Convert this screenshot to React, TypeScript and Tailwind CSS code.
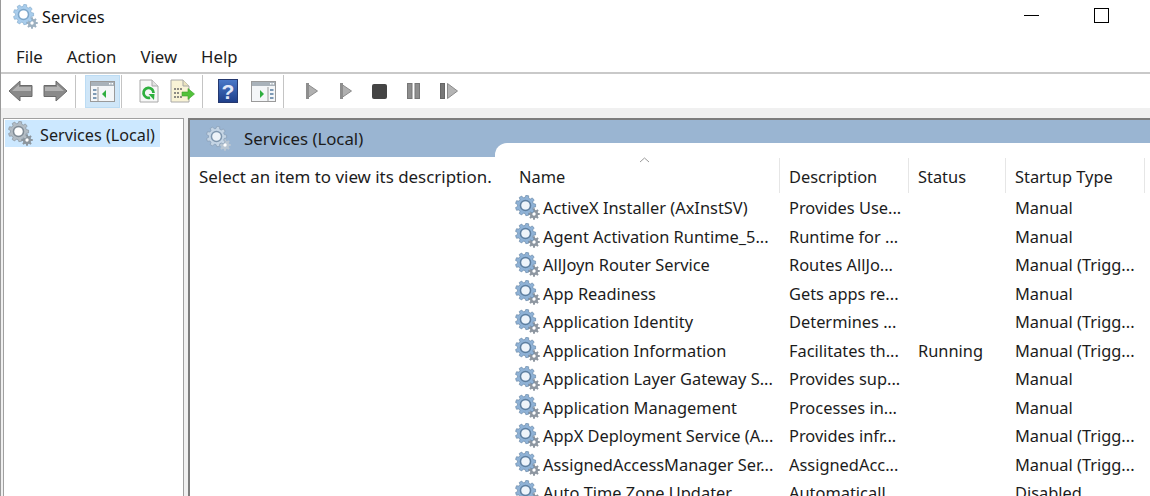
import React from "react";

const services = [
  ["ActiveX Installer (AxInstSV)", "Provides Use...", "", "Manual"],
  ["Agent Activation Runtime_5...", "Runtime for ...", "", "Manual"],
  ["AllJoyn Router Service", "Routes AllJo...", "", "Manual (Trigg..."],
  ["App Readiness", "Gets apps re...", "", "Manual"],
  ["Application Identity", "Determines ...", "", "Manual (Trigg..."],
  ["Application Information", "Facilitates th...", "Running", "Manual (Trigg..."],
  ["Application Layer Gateway S...", "Provides sup...", "", "Manual"],
  ["Application Management", "Processes in...", "", "Manual"],
  ["AppX Deployment Service (A...", "Provides infr...", "", "Manual (Trigg..."],
  ["AssignedAccessManager Ser...", "AssignedAcc...", "", "Manual (Trigg..."],
  ["Auto Time Zone Updater", "Automaticall...", "", "Disabled"],
];

function gearPath(cx: number, cy: number, outer: number, inner: number, teeth: number) {
  const pts: string[] = [];
  for (let i = 0; i < teeth; i++) {
    const step = (Math.PI * 2) / teeth;
    const a = i * step;
    [
      [-0.34, inner],
      [-0.2, outer],
      [0.2, outer],
      [0.34, inner],
    ].forEach(([off, r]) => {
      const t = a + off * step;
      pts.push((cx + Math.cos(t) * r).toFixed(2) + " " + (cy + Math.sin(t) * r).toFixed(2));
    });
  }
  return "M" + pts.join("L") + "Z";
}

const bigGear = gearPath(10.5, 10.5, 10.2, 8, 9);
const smallGear = gearPath(19, 19, 5.8, 4.2, 8);

function Gear({ big, edge, hole, small, className }: { big: string; edge: string; hole: string; small: string; className: string }) {
  return (
    <svg viewBox="0 0 25 25" className={"blur-[0.4px] " + className}>
      <path d={smallGear} fill={small} />
      <circle cx="19" cy="19" r="1.7" fill="#fff" />
      <path d={bigGear} fill={big} stroke={edge} strokeWidth="0.6" />
      <circle cx="10.5" cy="10.5" r="5" fill="none" stroke={edge} strokeWidth="1.6" />
      <circle cx="10.5" cy="10.5" r="4.1" fill={hole} />
    </svg>
  );
}

function Sep() {
  return <div className="h-[33px] w-px bg-[#c4c4c4]" />;
}

function Arrow({ flip }: { flip?: boolean }) {
  return (
    <svg viewBox="0 0 25 22" className={flip ? "h-[22px] w-[25px] scale-x-[-1] blur-[0.3px]" : "h-[22px] w-[25px] blur-[0.3px]"}>
      <path d="M1 11 L12 1 V5.5 H24 V16.5 H12 V21 Z" fill="#8a8a8a" stroke="#6b6b6b" strokeWidth="1" strokeLinejoin="round" />
      <path d="M4 11 L11 4.5 V7 H23 V11 Z" fill="#b2b2b2" />
    </svg>
  );
}

function PanelIcon({ right }: { right?: boolean }) {
  return (
    <svg viewBox="0 0 25 21" className="h-[21px] w-[25px] blur-[0.3px]">
      <rect x="0.5" y="0.5" width="24" height="20" fill="#f4f6f8" stroke="#9a9a9a" />
      <rect x="1" y="1" width="23" height="4" fill="#a9b2ba" />
      <rect x="19" y="2" width="1.5" height="1.5" fill="#fff" />
      <rect x="21.5" y="2" width="1.5" height="1.5" fill="#fff" />
      <path d={right ? "M17 6 V20" : "M8 6 V20"} stroke="#9a9a9a" />
      <g fill="#7e9ab5">
        <rect x={right ? 19 : 3} y="8" width="3.5" height="2" />
        <rect x={right ? 19 : 3} y="12" width="3.5" height="2" />
        <rect x={right ? 19 : 3} y="16" width="3.5" height="2" />
      </g>
      <path d={right ? "M9 9 L13 13 L9 17 Z" : "M16 9 L12 13 L16 17 Z"} fill="#2fae3f" />
    </svg>
  );
}

function RefreshIcon() {
  return (
    <svg viewBox="0 0 20 24" className="h-[24px] w-[20px] blur-[0.3px]">
      <path d="M1 1 H13 L19 7 V23 H1 Z" fill="#f7f7f7" stroke="#a8a8a8" />
      <path d="M13 1 V7 H19" fill="#e2e2e2" stroke="#a8a8a8" />
      <path d="M14.5 14 A5 5 0 1 0 11 18.6" fill="none" stroke="#2eb03e" strokeWidth="2.8" />
      <path d="M9.5 15 L15.5 15 L15 21 Z" fill="#2eb03e" />
    </svg>
  );
}

function ExportIcon() {
  return (
    <svg viewBox="0 0 25 24" className="h-[24px] w-[25px] blur-[0.3px]">
      <path d="M1 1 H13 L19 7 V23 H1 Z" fill="#f9f3d6" stroke="#a8a8a8" />
      <path d="M13 1 V7 H19" fill="#ece4bd" stroke="#a8a8a8" />
      <path d="M4 10 H12 M4 14 H10 M4 18 H12" stroke="#6a6a6a" strokeWidth="1.4" strokeDasharray="2 1" />
      <path d="M12 13 H18 V9.5 L24.5 15 L18 20.5 V17 H12 Z" fill="#52c23a" stroke="#3c9e2b" strokeWidth="0.6" />
    </svg>
  );
}

function HelpIcon() {
  return (
    <div className="flex h-[24px] w-[20px] items-center justify-center border border-[#24386f] bg-linear-to-b from-[#4a78c8] to-[#1f3f8a] font-['Liberation_Sans',sans-serif] text-[21px] leading-none font-bold text-[#e2e8f8]">
      ?
    </div>
  );
}

function Play() {
  return (
    <svg viewBox="0 0 12 16" className="h-[16px] w-[12px] blur-[0.3px]">
      <path d="M0.5 0.5 L11.5 8 L0.5 15.5 Z" fill="#b0b0b0" stroke="#8b8b8b" />
      <path d="M0 0 H3 V16 H0 Z" fill="#8e8e8e" />
    </svg>
  );
}

function Pause() {
  return (
    <svg viewBox="0 0 13 16" className="h-[16px] w-[13px] blur-[0.3px]">
      <rect x="0.5" y="0.5" width="4.5" height="15" fill="#8e8e8e" stroke="#777" />
      <rect x="8" y="0.5" width="4.5" height="15" fill="#8e8e8e" stroke="#777" />
    </svg>
  );
}

function Resume() {
  return (
    <svg viewBox="0 0 18 16" className="h-[16px] w-[18px] blur-[0.3px]">
      <rect x="0.5" y="0.5" width="4" height="15" fill="#777" stroke="#666" />
      <path d="M7.5 0.5 L17.5 8 L7.5 15.5 Z" fill="#b4b4b4" stroke="#8b8b8b" />
    </svg>
  );
}

function Row({ row }: { row: string[] }) {
  return (
    <div className="grid h-[28.5px] grid-cols-[284px_129px_97px_140px] items-center">
      <div className="flex items-center pl-[20px]">
        <Gear big="#8fb2d6" edge="#5f7f9f" hole="#eef4fa" small="#8d96a0" className="h-[25px] w-[25px] shrink-0" />
        <span className="ml-[3px] pt-[2px] whitespace-nowrap">{row[0]}</span>
      </div>
      <div className="pl-[10px] pt-[2px] whitespace-nowrap">{row[1]}</div>
      <div className="pl-[10px] pt-[2px] whitespace-nowrap">{row[2]}</div>
      <div className="pl-[10px] pt-[2px] whitespace-nowrap">{row[3]}</div>
    </div>
  );
}

export default function App() {
  return (
    <div className="flex h-[496px] w-[1150px] flex-col overflow-hidden border-l border-[#9a9a9a] bg-white font-['Noto_Sans',sans-serif] text-[16.4px] leading-none text-[#1c1c1c]">
      <div className="flex h-[32px] shrink-0 items-center pl-[12px]">
        <Gear big="#a9cdec" edge="#7ea6c8" hole="#fff" small="#9db0c0" className="h-[25px] w-[25px]" />
        <span className="ml-[4px] pt-[2px] text-[#111]">Services</span>
        <div className="ml-auto mr-[41px] -mt-[2px] flex items-center gap-[55px]">
          <div className="h-px w-[15px] bg-black" />
          <div className="h-[15px] w-[15px] border border-black" />
        </div>
      </div>
      <div className="flex h-[42px] shrink-0 items-center gap-[24px] border-b-2 border-[#c9c9c9] pl-[15px] pt-[10px] text-[16.75px]">
        <span>File</span>
        <span>Action</span>
        <span>View</span>
        <span>Help</span>
      </div>
      <div className="flex h-[34px] shrink-0 items-center pl-[7px]">
        <Arrow />
        <div className="ml-[10px]"><Arrow flip /></div>
        <div className="ml-[7px]"><Sep /></div>
        <div className="ml-[9px] flex h-[33px] w-[35px] items-center justify-center border border-[#bcdcf4] bg-[#cfe6f8]"><PanelIcon /></div>
        <div className="ml-px"><Sep /></div>
        <div className="ml-[17px]"><RefreshIcon /></div>
        <div className="ml-[11px]"><ExportIcon /></div>
        <div className="ml-[7px]"><Sep /></div>
        <div className="ml-[15px]"><HelpIcon /></div>
        <div className="ml-[13px]"><PanelIcon right /></div>
        <div className="ml-[7px]"><Sep /></div>
        <div className="ml-[22px]"><Play /></div>
        <div className="ml-[22px]"><Play /></div>
        <div className="ml-[20px] h-[15px] w-[15px] rounded-[2px] bg-[#444]" />
        <div className="ml-[20px]"><Pause /></div>
        <div className="ml-[20px]"><Resume /></div>
      </div>
      <div className="h-[10px] shrink-0 bg-[#f0f0f0]" />
      <div className="flex min-h-0 flex-1 bg-[#f0f0f0] pl-[2px]">
        <div className="h-full w-[181px] shrink-0 border-x border-t border-[#a0a0a0] bg-white pl-px pt-px">
          <div className="flex h-[27px] w-[155px] items-center bg-[#cce8ff] pl-[3px]">
            <Gear big="#b3bcc4" edge="#7f8a94" hole="#fff" small="#8c959d" className="h-[25px] w-[25px]" />
            <span className="ml-[7px] pt-[3px] text-[16.2px] whitespace-nowrap">Services (Local)</span>
          </div>
        </div>
        <div className="ml-[4px] flex h-full flex-1 flex-col border-l-2 border-t-2 border-[#7d7d7d] bg-white">
          <div className="flex h-[37px] shrink-0 items-center bg-[#9ab5d2] pl-[16px]">
            <Gear big="#c5d5e5" edge="#7f96ad" hole="#eef3f8" small="#b9c6d2" className="h-[25px] w-[25px]" />
            <span className="ml-[13px] pt-[2px] text-[16.8px] whitespace-nowrap">Services (Local)</span>
          </div>
          <div className="flex min-h-0 flex-1">
            <div className="w-[305px] shrink-0 bg-white pl-[9px] pt-[12px] text-[16.9px] whitespace-nowrap">Select an item to view its description.</div>
            <div className="relative -mt-[14px] flex-1 rounded-tl-[12px] bg-white">
              <div className="grid h-[50px] grid-cols-[284px_129px_97px_140px] items-end">
                <div className="relative flex h-[35px] items-center pl-[24px] pt-[3px]">
                  Name
                  <svg viewBox="0 0 11 6" className="absolute left-[144px] top-[-1px] h-[6px] w-[11px]">
                    <path d="M1 5 L5.5 1 L10 5" fill="none" stroke="#9a9a9a" />
                  </svg>
                </div>
                <div className="flex h-[35px] items-center border-l border-[#e6e6e6] pl-[9px] pt-[3px]">Description</div>
                <div className="flex h-[35px] items-center border-l border-[#e6e6e6] pl-[9px] pt-[3px]">Status</div>
                <div className="flex h-[35px] items-center border-x border-[#e6e6e6] pl-[9px] pt-[3px]">Startup Type</div>
              </div>
              {services.map((row) => (
                <Row key={row[0]} row={row} />
              ))}
            </div>
          </div>
        </div>
      </div>
    </div>
  );
}
